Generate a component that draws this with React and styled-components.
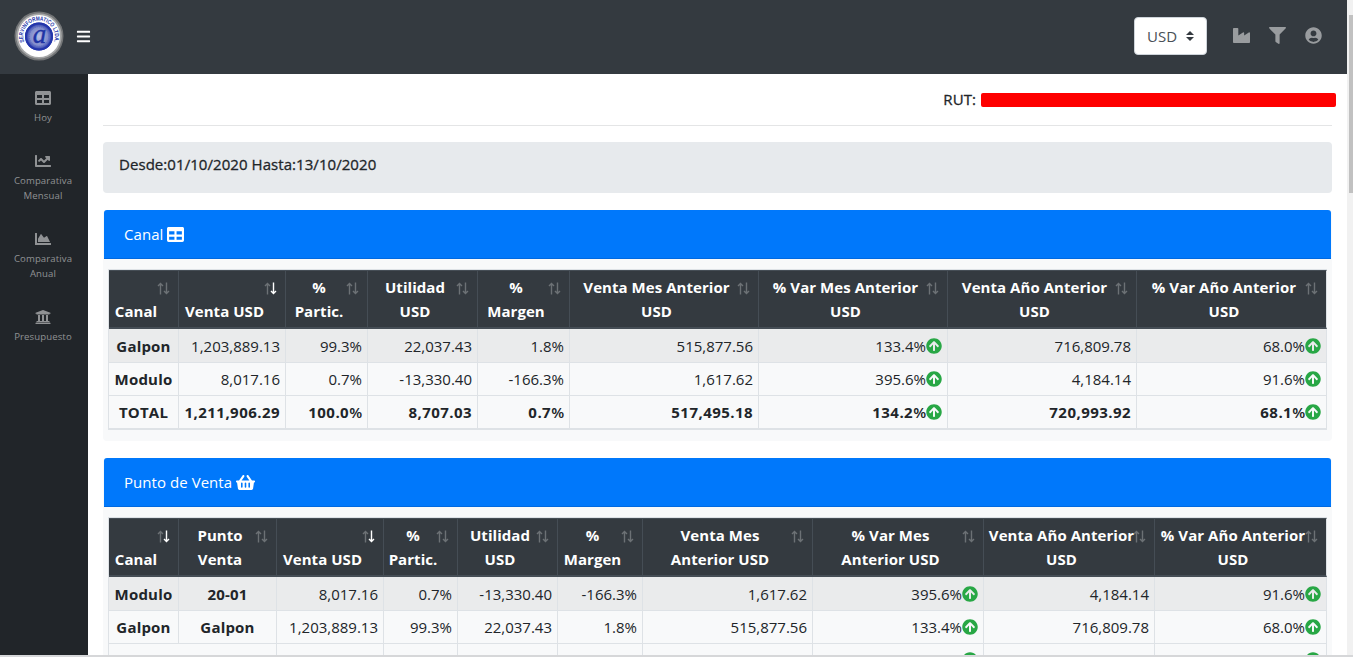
import React from "react";
import styled, { createGlobalStyle, css } from "styled-components";
import {
  FaTable,
  FaChartLine,
  FaChartArea,
  FaUniversity,
  FaIndustry,
  FaFilter,
  FaUserCircle,
  FaShoppingBasket,
  FaArrowCircleUp,
  FaBars,
} from "react-icons/fa";

const GlobalStyle = createGlobalStyle`
  * { box-sizing: border-box; }
  body {
    margin: 0;
    overflow: hidden;
    background: #fff;
    color: #212529;
    font-family: "Open Sans", "Noto Sans", sans-serif;
    font-size: 15px;
    line-height: 24px;
  }
  svg { display: block; flex: none; }
`;

const Window = styled.div`
  display: flex;
  width: 1353px;
  height: 657px;
  overflow: hidden;
  border-bottom: 2px solid #d6d7d9;
`;

const Page = styled.div`
  display: flex;
  flex-direction: column;
  width: 1347px;
  height: 655px;
`;

const ScrollTrack = styled.div`
  width: 6px;
  height: 655px;
  padding: 15px 0 0 2px;
  background: #f1f1f1;
`;

const ScrollThumb = styled.div`
  height: 178px;
  background: #c1c1c1;
`;

const Navbar = styled.header`
  display: flex;
  align-items: center;
  height: 74px;
  flex: none;
  padding: 0 25px 2px 14px;
  background: #343a40;
  color: #fff;
`;

const MenuButton = styled.button`
  display: flex;
  margin: 1px auto 0 12px;
  padding: 0;
  border: 0;
  background: none;
  color: #fff;
`;

const CurrencySelect = styled.div`
  display: flex;
  align-items: center;
  justify-content: space-between;
  width: 73px;
  height: 38px;
  margin-right: 26px;
  padding: 0 12px;
  border: 1px solid #ced4da;
  border-radius: 4px;
  background: #fff;
  color: #495057;
`;

const NavIcons = styled.nav`
  display: flex;
  align-items: center;
  gap: 19px;
  padding-bottom: 1px;
  color: #999c9f;
  svg { width: 17px; height: 17px; }
`;

const Body = styled.div`
  display: flex;
  flex: 1;
  min-height: 0;
`;

const Sidebar = styled.aside`
  width: 88px;
  padding-top: 16px;
  background: #212529;
`;

const SideLink = styled.div`
  display: flex;
  flex-direction: column;
  align-items: center;
  margin-bottom: 28px;
  padding-right: 2px;
  color: #909294;
  font-size: 9.6px;
  line-height: 15px;
  letter-spacing: 0.1px;
  text-align: center;
  white-space: pre-line;
  svg { width: 18px; height: 16px; margin-bottom: 4px; }
`;

const Main = styled.main`
  flex: 1;
  min-width: 0;
  padding: 13px 15px 0;
  overflow: hidden;
`;

const mediumText = css`
  letter-spacing: 0.06px;
  -webkit-text-stroke: 0.3px currentColor;
`;

const RutLine = styled.div`
  display: flex;
  align-items: center;
  justify-content: flex-end;
  height: 24px;
  margin-right: -4px;
  ${mediumText}
`;

const Redacted = styled.span`
  width: 355px;
  height: 14px;
  margin: 2px 0 0 5px;
  border-radius: 2px;
  background: #fe0000;
`;

const Rule = styled.hr`
  height: 1px;
  margin: 14px 0 16px;
  border: 0;
  background: #e4e5e6;
`;

const DateRange = styled.div`
  height: 51px;
  margin-bottom: 17px;
  padding: 10px 16px;
  border-radius: 4px;
  background: #e7eaed;
  ${mediumText}
`;

const Card = styled.section`
  height: ${(p) => p.$height}px;
  margin-bottom: 17px;
  border-radius: 4px;
  background: #f8f9fa;
`;

const CardHeader = styled.h2`
  display: flex;
  align-items: center;
  gap: 4px;
  height: 49px;
  margin: 0 1px 10px;
  padding: 0 20px;
  border-bottom: 1px solid #0069e0;
  border-radius: 3px 3px 0 0;
  background: #0078fb;
  color: #fff;
  font-size: 15px;
  font-weight: 400;
  span { letter-spacing: 0.05px; }
`;

const Table = styled.table`
  width: 1219px;
  margin-left: 5px;
  border: solid #dee2e6;
  border-width: 1px 0 0 1px;
  border-collapse: separate;
  border-spacing: 0;
  table-layout: fixed;
`;

const HeadCell = styled.th`
  position: relative;
  height: 59px;
  padding: 3px 20px 4px 5px;
  border: solid #454d55;
  border-width: 1px 1px 2px 0;
  background: #343a40;
  color: #fff;
  font-weight: 700;
  letter-spacing: 0.05px;
  vertical-align: bottom;
  white-space: pre;
  &:last-child { border-right-color: #dee2e6; }
`;

const HeadLabel = styled.div`
  display: flex;
  justify-content: center;
  text-align: center;
`;

const SortMark = styled.svg`
  position: absolute;
  top: 11px;
  right: 8px;
`;

const cell = css`
  padding: 0 5px;
  border: solid #dee2e6;
  border-width: 0 1px 1px 0;
  white-space: nowrap;
`;

const RowName = styled.th`
  ${cell}
  font-weight: 700;
  letter-spacing: 0.2px;
  text-align: center;
`;

const Value = styled.td`
  ${cell}
  text-align: right;
`;

const ValueLine = styled.div`
  display: flex;
  align-items: center;
  justify-content: flex-end;
  svg { color: #28a745; font-size: 16px; }
`;

const Row = styled.tr`
  font-weight: ${(p) => (p.$total ? 700 : 400)};
  letter-spacing: ${(p) => (p.$total ? "0.45px" : "0")};
  background: ${(p) => (p.$shaded ? "#eaebec" : "transparent")};
  & > * {
    height: ${(p) => (p.$shaded || p.$total ? 34 : 33)}px;
    ${(p) => p.$total && "border-bottom-width: 2px;"}
  }
`;

const Percent = styled.span`
  font-weight: ${(p) => (p.$strong ? 600 : 400)};
  letter-spacing: ${(p) => (p.$strong ? "-0.1px" : "0")};
`;

function Logo() {
  return (
    <svg width="50" height="50" viewBox="0 0 50 50">
      <defs>
        <path id="ring" d="M10.2 30.9 A15.8 15.8 0 1 1 39.8 30.9" />
        <radialGradient id="globe">
          <stop offset="0" stopColor="#b8bfe4" />
          <stop offset="0.65" stopColor="#7f8bcb" />
          <stop offset="0.85" stopColor="#3d4db3" />
          <stop offset="1" stopColor="#1c2ea8" />
        </radialGradient>
      </defs>
      <circle cx="25" cy="25" r="24.5" fill="#737577" />
      <circle cx="25" cy="25" r="22.8" fill="#a5a6a7" />
      <circle cx="25" cy="25" r="21" fill="#fff" />
      <circle cx="25" cy="25.5" r="14" fill="url(#globe)" />
      <circle cx="25" cy="25.5" r="13" fill="none" stroke="#2436ab" strokeWidth="2" />
      <circle cx="25" cy="25.5" r="9.8" fill="none" stroke="#5261bd" strokeWidth="0.7" strokeDasharray="1 1" />
      <text
        x="25.5"
        y="31.5"
        textAnchor="middle"
        fontFamily="Liberation Serif, serif"
        fontStyle="italic"
        fontSize="27"
        fill="#2034a5"
        stroke="#2034a5"
        strokeWidth="0.4"
      >
        a
      </text>
      <text fontFamily="Liberation Sans, sans-serif" fontWeight="700" fontSize="6" fill="#2436ab">
        <textPath href="#ring" textLength="60" lengthAdjust="spacingAndGlyphs">
          SERVINFORMATICO LTDA.
        </textPath>
      </text>
    </svg>
  );
}

function SelectCaret() {
  return (
    <svg width="8" height="10" viewBox="0 0 4 5">
      <path fill="#343a40" d="M2 0L0 2h4zm0 5L0 3h4z" />
    </svg>
  );
}

function Sort({ active }) {
  return (
    <SortMark width="13" height="13" viewBox="0 0 13 13" fill="none" strokeWidth="1.4">
      <path d="M3.5 12.5V1.5M1 4L3.5 1.5L6 4" stroke="#6c7175" />
      <path d="M9.5 0.5V11.5M7 9L9.5 11.5L12 9" stroke={active ? "#fff" : "#6c7175"} />
    </SortMark>
  );
}

function Amount({ text, up, strong }) {
  const percent = text.endsWith("%");
  return (
    <ValueLine>
      {percent ? text.slice(0, -1) : text}
      {percent && <Percent $strong={strong}>%</Percent>}
      {up && <FaArrowCircleUp />}
    </ValueLine>
  );
}

function DataTable({ columns, rows }) {
  return (
    <Table>
      <colgroup>
        {columns.map((c, i) => (
          <col key={i} width={c.width} />
        ))}
      </colgroup>
      <thead>
        <tr>
          {columns.map((c, i) => (
            <HeadCell key={i}>
              <HeadLabel>{c.label}</HeadLabel>
              <Sort active={c.sorted} />
            </HeadCell>
          ))}
        </tr>
      </thead>
      <tbody>
        {rows.map((r, i) => (
          <Row key={i} $shaded={i === 0} $total={r.total}>
            {r.names.map((n, j) => (
              <RowName key={j} colSpan={r.span || 1}>
                {n}
              </RowName>
            ))}
            {r.values.map((v, j) => (
              <Value key={j}>
                <Amount text={v} up={j === 5 || j === 7} strong={r.total} />
              </Value>
            ))}
          </Row>
        ))}
      </tbody>
    </Table>
  );
}

const galpon = ["1,203,889.13", "99.3%", "22,037.43", "1.8%", "515,877.56", "133.4%", "716,809.78", "68.0%"];
const modulo = ["8,017.16", "0.7%", "-13,330.40", "-166.3%", "1,617.62", "395.6%", "4,184.14", "91.6%"];
const total = ["1,211,906.29", "100.0%", "8,707.03", "0.7%", "517,495.18", "134.2%", "720,993.92", "68.1%"];

const canalColumns = [
  { label: "Canal", width: 70 },
  { label: "Venta USD", width: 107, sorted: true },
  { label: "%\nPartic.", width: 82 },
  { label: "Utilidad\nUSD", width: 110 },
  { label: "%\nMargen", width: 92 },
  { label: "Venta Mes Anterior\nUSD", width: 189 },
  { label: "% Var Mes Anterior\nUSD", width: 189 },
  { label: "Venta Año Anterior\nUSD", width: 189 },
  { label: "% Var Año Anterior\nUSD", width: 190 },
];

const puntoColumns = [
  { label: "Canal", width: 70, sorted: true },
  { label: "Punto\nVenta", width: 98 },
  { label: "Venta USD", width: 107, sorted: true },
  { label: "%\nPartic.", width: 74 },
  { label: "Utilidad\nUSD", width: 100 },
  { label: "%\nMargen", width: 85 },
  { label: "Venta Mes\nAnterior USD", width: 170 },
  { label: "% Var Mes\nAnterior USD", width: 171 },
  { label: "Venta Año Anterior\nUSD", width: 171 },
  { label: "% Var Año Anterior\nUSD", width: 172 },
];

export default function App() {
  return (
    <Window>
      <GlobalStyle />
      <Page>
        <Navbar>
          <Logo />
          <MenuButton>
            <FaBars size={15} />
          </MenuButton>
          <CurrencySelect>
            USD <SelectCaret />
          </CurrencySelect>
          <NavIcons>
            <FaIndustry />
            <FaFilter />
            <FaUserCircle />
          </NavIcons>
        </Navbar>
        <Body>
          <Sidebar>
            <SideLink>
              <FaTable />
              Hoy
            </SideLink>
            <SideLink>
              <FaChartLine />
              {"Comparativa\nMensual"}
            </SideLink>
            <SideLink>
              <FaChartArea />
              {"Comparativa\nAnual"}
            </SideLink>
            <SideLink>
              <FaUniversity />
              Presupuesto
            </SideLink>
          </Sidebar>
          <Main>
            <RutLine>
              RUT:
              <Redacted />
            </RutLine>
            <Rule />
            <DateRange>Desde:01/10/2020 Hasta:13/10/2020</DateRange>
            <Card $height={231}>
              <CardHeader>
                <span>Canal</span> <FaTable size={17} />
              </CardHeader>
              <DataTable
                columns={canalColumns}
                rows={[
                  { names: ["Galpon"], values: galpon },
                  { names: ["Modulo"], values: modulo },
                  { names: ["TOTAL"], values: total, total: true },
                ]}
              />
            </Card>
            <Card $height={264}>
              <CardHeader>
                <span>Punto de Venta</span> <FaShoppingBasket size={19} />
              </CardHeader>
              <DataTable
                columns={puntoColumns}
                rows={[
                  { names: ["Modulo", "20-01"], values: modulo },
                  { names: ["Galpon", "Galpon"], values: galpon },
                  { names: ["TOTAL"], span: 2, values: total, total: true },
                ]}
              />
            </Card>
          </Main>
        </Body>
      </Page>
      <ScrollTrack>
        <ScrollThumb />
      </ScrollTrack>
    </Window>
  );
}
